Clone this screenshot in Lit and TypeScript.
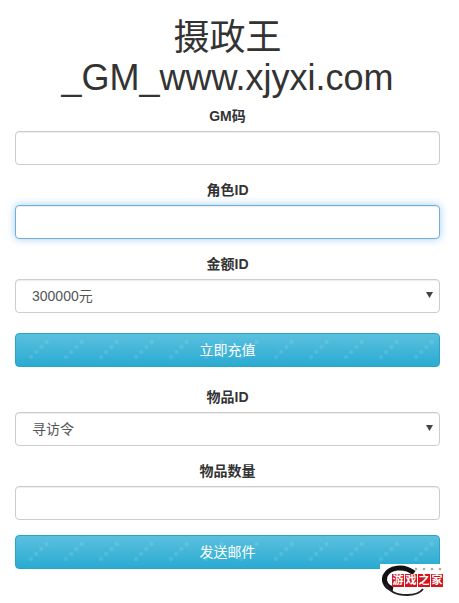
import { LitElement, html, css, svg } from "lit";
import { customElement } from "lit/decorators.js";

const watermark = html`<svg class="wm" aria-hidden="true">
  <defs>
    <pattern id="wm-p" x="13" y="0" width="35" height="34" patternUnits="userSpaceOnUse">
      ${[0, 1, 2, 3].map(
        (i) => svg`<rect x="${i * 5.2}" y="${21 - i * 5}" width="4" height="4" rx="1.5" fill="#fff" opacity="0.1"></rect>`
      )}
    </pattern>
  </defs>
  <rect width="100%" height="100%" fill="url(#wm-p)"></rect>
</svg>`;

@customElement("app-root")
export class AppRoot extends LitElement {
  static styles = css`
    :host {
      display: block;
      position: relative;
      width: 459px;
      height: 603px;
      overflow: hidden;
      background: #fff;
      color: #333;
      font-family: "Liberation Sans", Arial, "Noto Sans CJK SC", sans-serif;
      font-size: 14px;
      line-height: 20px;
    }
    .page {
      width: 455px;
      box-sizing: border-box;
      padding: 18px 15px 0;
    }
    h1 {
      margin: 0 0 8px;
      font-size: 36px;
      font-weight: 400;
      line-height: 40px;
      text-align: center;
      color: #333;
    }
    .group {
      display: flex;
      flex-direction: column;
      margin-bottom: 15px;
    }
    label {
      font-weight: 700;
      text-align: center;
      margin-bottom: 5px;
    }
    .control {
      display: block;
      width: 100%;
      height: 34px;
      box-sizing: border-box;
      padding: 6px 16px;
      border: 1px solid #ccc;
      border-radius: 4px;
      background: #fff;
      color: #555;
      font: inherit;
      outline: none;
      box-shadow: inset 0 1px 1px rgba(0, 0, 0, 0.075);
    }
    .focus {
      border-color: #72aedb;
      box-shadow: inset 0 1px 1px rgba(0, 0, 0, 0.075),
        0 0 8px rgba(102, 175, 233, 0.6);
    }
    .select-wrap {
      position: relative;
    }
    select.control {
      appearance: none;
      -webkit-appearance: none;
    }
    .arrow {
      position: absolute;
      right: 7px;
      top: 13px;
      width: 7px;
      height: 6px;
      fill: #444;
    }
    .btn {
      position: relative;
      display: block;
      width: 100%;
      height: 34px;
      box-sizing: border-box;
      padding: 0;
      border: 1px solid #28a4c9;
      border-radius: 4px;
      background: linear-gradient(to bottom, #5bc0de, #2aabd2);
      color: #fff;
      font: inherit;
      text-align: center;
      overflow: hidden;
    }
    .btn span {
      position: relative;
    }
    .wm {
      position: absolute;
      inset: 0;
      width: 100%;
      height: 100%;
    }
    .charge {
      margin: 20px 0 20px;
    }
    .logo {
      position: absolute;
      left: 380px;
      top: 564px;
      width: 79px;
      height: 39px;
      background: #fff;
    }
    .logo svg {
      position: absolute;
      inset: 0;
      width: 79px;
      height: 39px;
    }
    .logo .tags {
      position: absolute;
      left: 12px;
      top: 10px;
      display: flex;
      gap: 1px;
    }
    .logo .tags b {
      width: 12px;
      height: 13px;
      background: #d3141c;
      color: #fff;
      font-size: 11px;
      line-height: 13px;
      font-weight: 700;
      text-align: center;
    }
  `;

  private field(name: string, focus = false) {
    return html`<div class="group">
      <label>${name}</label>
      <input class="control ${focus ? "focus" : ""}" type="text" />
    </div>`;
  }

  private select(name: string, value: string) {
    return html`<div class="group">
      <label>${name}</label>
      <div class="select-wrap">
        <select class="control"><option>${value}</option></select>
        <svg class="arrow" viewBox="0 0 7 6"><path d="M0 0H7L3.5 6Z"></path></svg>
      </div>
    </div>`;
  }

  render() {
    return html`<div class="page">
        <h1>摄政王<br />_GM_www.xjyxi.com</h1>
        ${this.field("GM码")} ${this.field("角色ID", true)}
        ${this.select("金额ID", "300000元")}
        <button class="btn charge">${watermark}<span>立即充值</span></button>
        ${this.select("物品ID", "寻访令")} ${this.field("物品数量")}
        <button class="btn">${watermark}<span>发送邮件</span></button>
      </div>
      <div class="logo">
        <svg viewBox="0 0 79 39" aria-hidden="true">
          <path d="M34 9C24 1 9 3 5 12C3 18 7 24 13 25" fill="none" stroke="#111" stroke-width="5"></path>
          <path d="M6 20C9 28 18 31 27 31C34 31 40 29 43 25" fill="none" stroke="#222" stroke-width="2"></path>
          ${[0, 1, 2, 3].map(
            (i) => svg`<circle cx="${36 + i * 8}" cy="5" r="1.3" fill="#aaa"></circle>`
          )}
        </svg>
        <div class="tags"><b>游</b><b>戏</b><b>之</b><b>家</b></div>
      </div>`;
  }
}
